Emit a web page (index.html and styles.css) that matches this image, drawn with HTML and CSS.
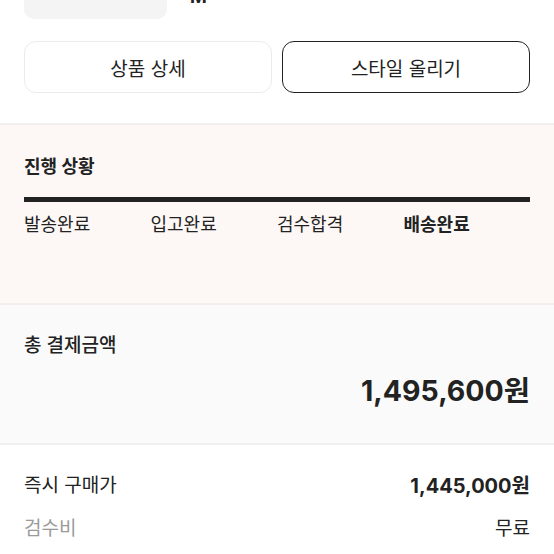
FILE: index.html
```html
<!DOCTYPE html>
<html lang="ko">
<head>
    <meta charset="UTF-8">
    <meta name="viewport" content="width=device-width, initial-scale=1.0">
    <title>구매 내역 상세</title>
    <link rel="stylesheet" href="styles.css">
</head>
<body>

    <!-- Product summary (scrolled partly out of view) -->
    <div class="product">
        <div class="thumb"></div>
        <div class="product-info">
            <p class="size">M</p>
        </div>
    </div>

    <div class="actions">
        <button class="btn">상품 상세</button>
        <button class="btn btn-dark">스타일 올리기</button>
    </div>

    <!-- Progress -->
    <section class="progress">
        <h3 class="section-title">진행 상황</h3>
        <div class="progress-bar"></div>
        <ul class="steps">
            <li>발송완료</li>
            <li>입고완료</li>
            <li>검수합격</li>
            <li class="current">배송완료</li>
        </ul>
    </section>

    <!-- Total -->
    <section class="total">
        <h3 class="total-title">총 결제금액</h3>
        <p class="total-price">1,495,600원</p>
    </section>

    <!-- Price breakdown -->
    <section class="breakdown">
        <div class="row">
            <span>즉시 구매가</span>
            <span class="row-value strong">1,445,000원</span>
        </div>
        <div class="row">
            <span class="muted">검수비</span>
            <span class="row-value">무료</span>
        </div>
    </section>

</body>
</html>
```

FILE: styles.css
```css
/* General Styles */
body {
    font-family: Inter, "Noto Sans CJK KR", sans-serif;
    margin: 0;
    padding: 0;
    background: #fff;
    color: #222;
}

p, h3, ul {
    margin: 0;
    padding: 0;
}

/* Product summary */
.product {
    display: flex;
    gap: 23px;
    padding: 0 24px;
    margin-top: -60px;
}

.thumb {
    width: 143px;
    height: 79px;
    background: #f4f4f4;
    border-radius: 10px;
}

.product-info {
    align-self: flex-end;
    margin-bottom: 12px;
}

.size {
    font-size: 18px;
    font-weight: 700;
    line-height: 20px;
}

/* Buttons */
.actions {
    display: flex;
    gap: 10px;
    padding: 22px 24px 30px;
}

.btn {
    flex: 1;
    height: 52px;
    background: #fff;
    border: 1px solid #ebebeb;
    border-radius: 12px;
    font-family: inherit;
    font-size: 19px;
    color: #222;
}

.btn-dark {
    border-color: #222;
}

/* Progress section */
.progress {
    background: #fdf8f6;
    border-top: 2px solid #f0f0f0;
    padding: 31px 24px 67px;
}

.section-title {
    font-size: 18px;
    font-weight: 700;
    line-height: 22px;
}

.progress-bar {
    height: 5px;
    background: #222;
    margin: 19px 0 12px;
}

.steps {
    list-style: none;
    display: grid;
    grid-template-columns: repeat(4, 1fr);
    font-size: 18px;
    line-height: 22px;
}

.steps .current {
    font-weight: 700;
}

/* Total section */
.total {
    background: #fafafa;
    border-top: 2px solid #f3eeec;
    border-bottom: 2px solid #f0f0f0;
    padding: 30px 24px 34px;
}

.total-title {
    font-size: 19px;
    font-weight: 500;
    line-height: 22px;
}

.total-price {
    margin-top: 16px;
    text-align: right;
    font-size: 28.5px;
    font-weight: 700;
    line-height: 36px;
}

/* Breakdown */
.breakdown {
    padding: 30px 24px;
    display: flex;
    flex-direction: column;
    gap: 21px;
}

.row {
    display: flex;
    justify-content: space-between;
    align-items: center;
    font-size: 19px;
    line-height: 22px;
}

.row-value.strong {
    font-size: 20px;
    font-weight: 700;
}

.muted {
    color: #9a9a9a;
}
```
